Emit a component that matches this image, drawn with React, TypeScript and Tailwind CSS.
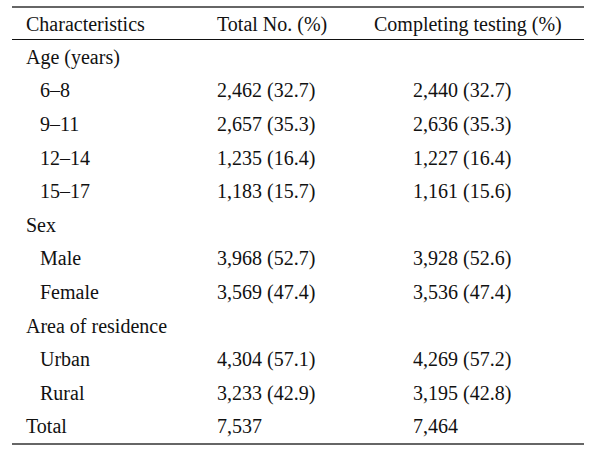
import React from "react";

type Row = { label: string; a?: string; b?: string; indent?: boolean };

const rows: Row[] = [
  { label: "Age (years)" },
  { label: "6–8", a: "2,462 (32.7)", b: "2,440 (32.7)", indent: true },
  { label: "9–11", a: "2,657 (35.3)", b: "2,636 (35.3)", indent: true },
  { label: "12–14", a: "1,235 (16.4)", b: "1,227 (16.4)", indent: true },
  { label: "15–17", a: "1,183 (15.7)", b: "1,161 (15.6)", indent: true },
  { label: "Sex" },
  { label: "Male", a: "3,968 (52.7)", b: "3,928 (52.6)", indent: true },
  { label: "Female", a: "3,569 (47.4)", b: "3,536 (47.4)", indent: true },
  { label: "Area of residence" },
  { label: "Urban", a: "4,304 (57.1)", b: "4,269 (57.2)", indent: true },
  { label: "Rural", a: "3,233 (42.9)", b: "3,195 (42.8)", indent: true },
  { label: "Total", a: "7,537", b: "7,464" },
];

export default function App() {
  return (
    <div
      className="w-[607px] h-[450px] bg-white text-[#111] overflow-hidden"
      style={{ fontFamily: '"Liberation Serif", "Times New Roman", serif' }}
    >
      <div className="ml-[12px] mt-[6px] w-[572px] border-t-2 border-[#666] text-[20px] leading-none">
        <div className="grid grid-cols-[205px_157px_1fr] h-[32px] items-center border-b border-[#111]">
          <div className="pl-[14px]">Characteristics</div>
          <div>Total No. (%)</div>
          <div>Completing testing (%)</div>
        </div>
        <div className="border-b-2 border-[#666]">
          {rows.map((r) => (
            <div
              key={r.label}
              className="grid grid-cols-[205px_157px_1fr] h-[33.6px] items-center"
            >
              <div className={r.indent ? "pl-[28px]" : "pl-[14px]"}>{r.label}</div>
              <div>{r.a ?? ""}</div>
              <div className="pl-[39px]">{r.b ?? ""}</div>
            </div>
          ))}
        </div>
      </div>
    </div>
  );
}
